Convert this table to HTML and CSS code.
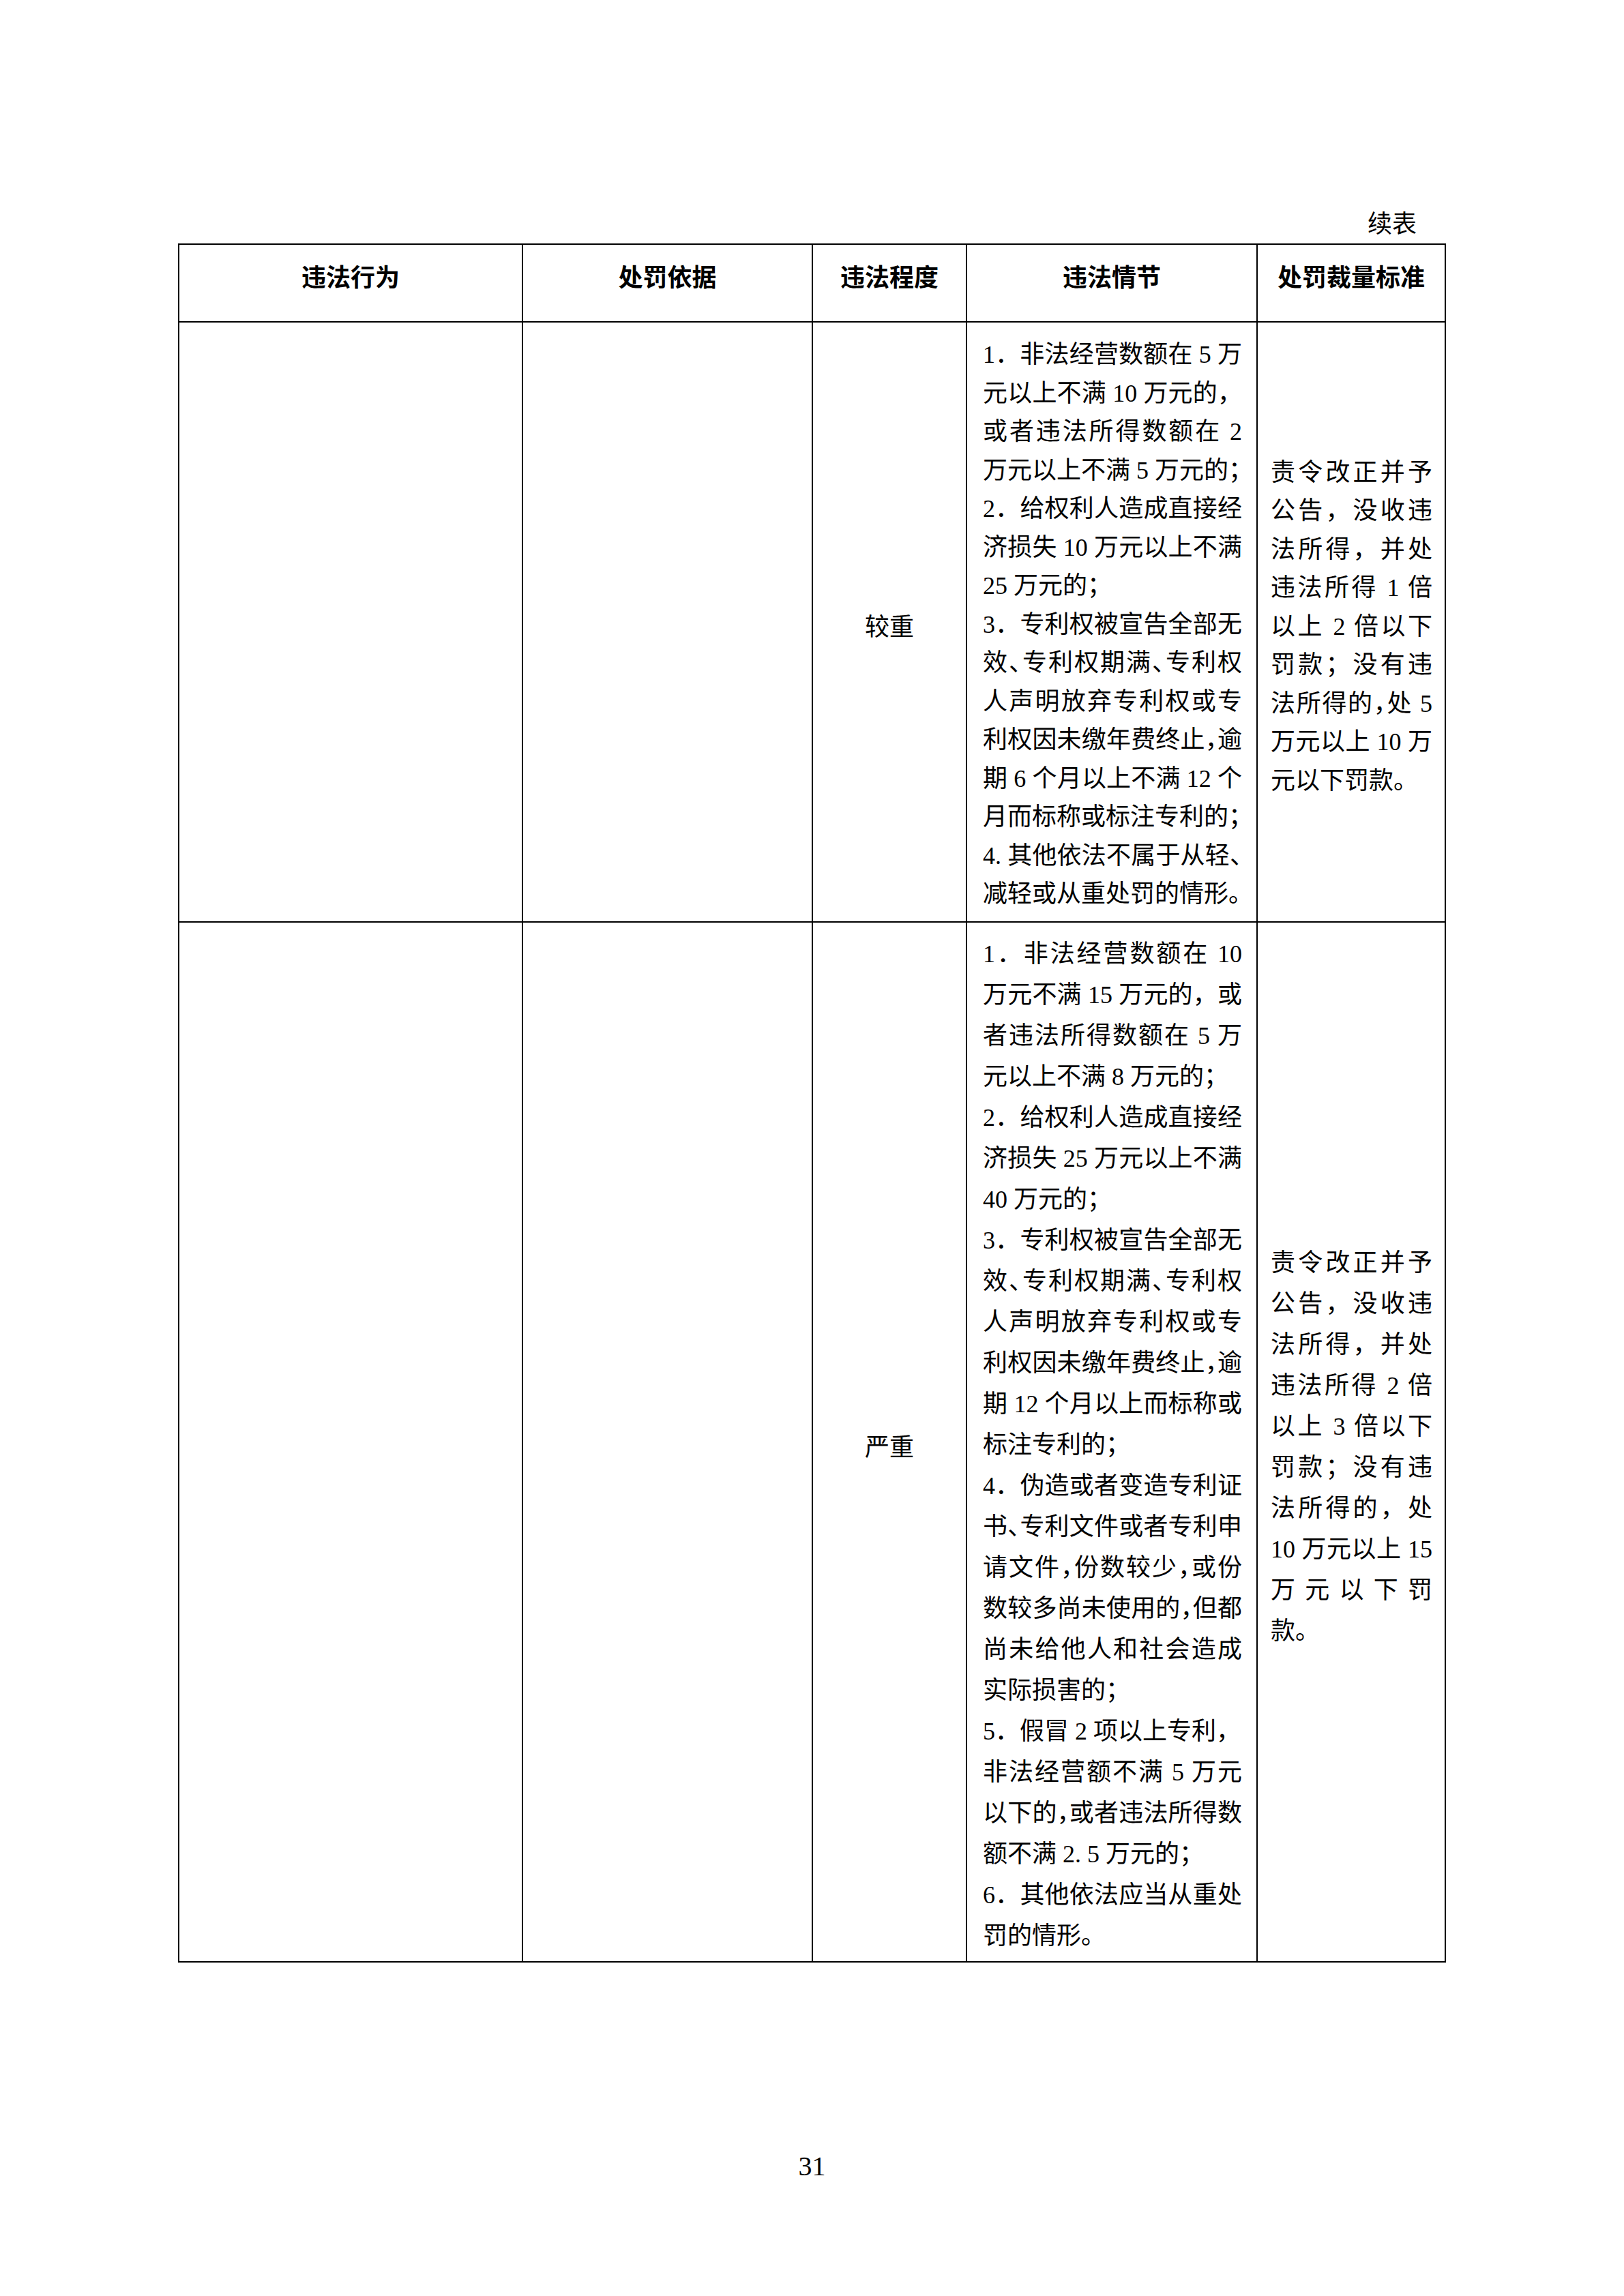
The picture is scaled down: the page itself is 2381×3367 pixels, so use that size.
FILE: index.html
```html
<!DOCTYPE html>
<html lang="zh-CN">
<head>
<meta charset="utf-8">
<title>续表</title>
<link rel="stylesheet" href="styles.css">
</head>
<body>
<div class="page">
  <div class="cont">续表</div>
  <div class="grid">
    <div class="cell head">违法行为</div>
    <div class="cell head">处罚依据</div>
    <div class="cell head">违法程度</div>
    <div class="cell head">违法情节</div>
    <div class="cell head">处罚裁量标准</div>

    <div class="cell r1"></div>
    <div class="cell r1"></div>
    <div class="cell deg r1">较重</div>
    <div class="cell desc r1">
      <div class="ln j">1．非法经营数额在 5 万</div>
      <div class="ln j">元以上不满 10 万元的，</div>
      <div class="ln j">或者违法所得数额在 2</div>
      <div class="ln">万元以上不满 5 万元的<span class="h">；</span></div>
      <div class="ln j">2．给权利人造成直接经</div>
      <div class="ln j">济损失 10 万元以上不满</div>
      <div class="ln">25 万元的；</div>
      <div class="ln j">3．专利权被宣告全部无</div>
      <div class="ln j">效<span class="h">、</span>专利权期满<span class="h">、</span>专利权</div>
      <div class="ln j">人声明放弃专利权或专</div>
      <div class="ln j">利权因未缴年费终止<span class="h">，</span>逾</div>
      <div class="ln j">期 6 个月以上不满 12 个</div>
      <div class="ln">月而标称或标注专利的<span class="h">；</span></div>
      <div class="ln j">4. 其他依法不属于从轻<span class="h">、</span></div>
      <div class="ln">减轻或从重处罚的情形<span class="h">。</span></div>
    </div>
    <div class="cell std r1">
      <div class="ln j">责令改正并予</div>
      <div class="ln j">公告，没收违</div>
      <div class="ln j">法所得，并处</div>
      <div class="ln j">违法所得 1 倍</div>
      <div class="ln j">以上 2 倍以下</div>
      <div class="ln j">罚款；没有违</div>
      <div class="ln j">法所得的<span class="h">，</span>处 5</div>
      <div class="ln j">万元以上 10 万</div>
      <div class="ln">元以下罚款。</div>
    </div>

    <div class="cell r2"></div>
    <div class="cell r2"></div>
    <div class="cell deg r2">严重</div>
    <div class="cell desc r2">
      <div class="ln j">1．非法经营数额在 10</div>
      <div class="ln j">万元不满 15 万元的，或</div>
      <div class="ln j">者违法所得数额在 5 万</div>
      <div class="ln">元以上不满 8 万元的；</div>
      <div class="ln j">2．给权利人造成直接经</div>
      <div class="ln j">济损失 25 万元以上不满</div>
      <div class="ln">40 万元的；</div>
      <div class="ln j">3．专利权被宣告全部无</div>
      <div class="ln j">效<span class="h">、</span>专利权期满<span class="h">、</span>专利权</div>
      <div class="ln j">人声明放弃专利权或专</div>
      <div class="ln j">利权因未缴年费终止<span class="h">，</span>逾</div>
      <div class="ln j">期 12 个月以上而标称或</div>
      <div class="ln">标注专利的；</div>
      <div class="ln j">4．伪造或者变造专利证</div>
      <div class="ln j">书<span class="h">、</span>专利文件或者专利申</div>
      <div class="ln j">请文件<span class="h">，</span>份数较少<span class="h">，</span>或份</div>
      <div class="ln j">数较多尚未使用的<span class="h">，</span>但都</div>
      <div class="ln j">尚未给他人和社会造成</div>
      <div class="ln">实际损害的；</div>
      <div class="ln">5．假冒 2 项以上专利，</div>
      <div class="ln j">非法经营额不满 5 万元</div>
      <div class="ln j">以下的<span class="h">，</span>或者违法所得数</div>
      <div class="ln">额不满 2. 5 万元的；</div>
      <div class="ln j">6．其他依法应当从重处</div>
      <div class="ln">罚的情形。</div>
    </div>
    <div class="cell std r2">
      <div class="ln j">责令改正并予</div>
      <div class="ln j">公告，没收违</div>
      <div class="ln j">法所得，并处</div>
      <div class="ln j">违法所得 2 倍</div>
      <div class="ln j">以上 3 倍以下</div>
      <div class="ln j">罚款；没有违</div>
      <div class="ln j">法所得的，处</div>
      <div class="ln j">10 万元以上 15</div>
      <div class="ln j">万 元 以 下 罚</div>
      <div class="ln">款。</div>
    </div>
  </div>
  <div class="pageno">31</div>
</div>
</body>
</html>
```

FILE: styles.css
```css
html, body {
  margin: 0;
  padding: 0;
  background: #ffffff;
}

.page {
  width: 2381px;
  height: 3367px;
  box-sizing: border-box;
  padding-top: 300px;
  color: #000000;
  font-family: "Liberation Serif", "Noto Sans CJK SC", serif;
  font-size: 36px;
}

.cont {
  margin-left: 261px;
  width: 1859px;
  box-sizing: border-box;
  padding-right: 43px;
  height: 50px;
  line-height: 58px;
  text-align: right;
}

.grid {
  display: grid;
  grid-template-columns: 504px 425px 226px 426px 276px;
  grid-template-rows: 114px 880px 1525px;
  width: 1857px;
  margin-left: 261px;
  margin-top: 7px;
  border-top: 2px solid #000;
  border-left: 2px solid #000;
}

.cell {
  box-sizing: border-box;
  border-right: 2px solid #000;
  border-bottom: 2px solid #000;
  display: flex;
  flex-direction: column;
  justify-content: center;
}

.head {
  align-items: center;
  padding-bottom: 23px;
  font-family: "Noto Sans CJK SC", sans-serif;
  font-weight: 700;
  line-height: 50px;
}

.deg {
  align-items: center;
  padding-top: 8px;
}

.desc {
  padding: 8px 21px 0 23px;
}

.std {
  padding: 14px 18px 0 19px;
}

.r1 .ln {
  line-height: 56.5px;
}

.r2 .ln {
  line-height: 60px;
}

.ln {
  white-space: nowrap;
  text-align: left;
}

.j {
  text-align: justify;
  text-align-last: justify;
}

.h {
  font-feature-settings: "halt";
}

.pageno {
  margin-top: 274px;
  height: 50px;
  line-height: 50px;
  text-align: center;
  font-size: 40px;
}
```
